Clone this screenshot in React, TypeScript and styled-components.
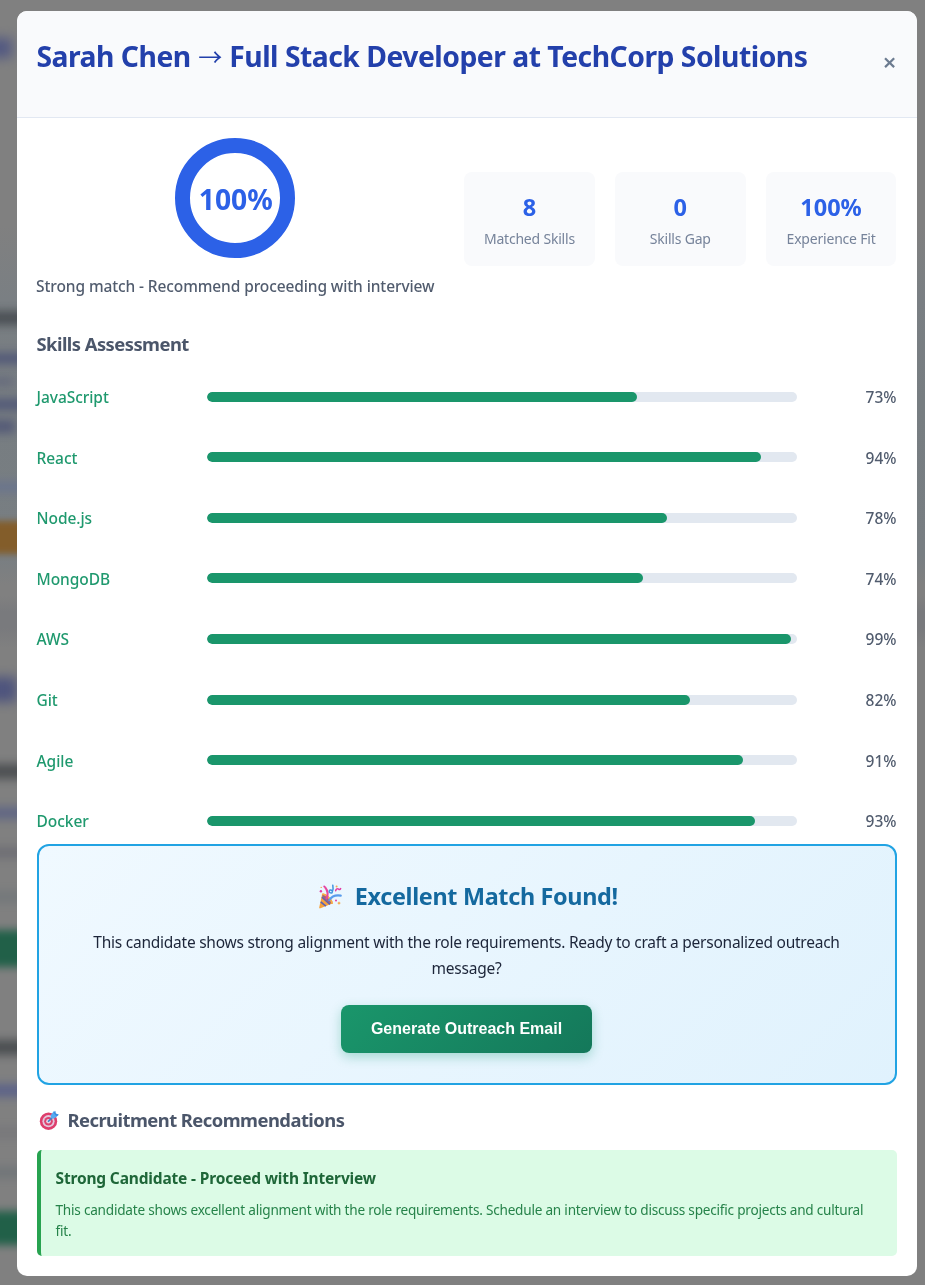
import React from "react";
import styled, { createGlobalStyle } from "styled-components";

const GlobalStyle = createGlobalStyle`
  * { box-sizing: border-box; margin: 0; }
  html, body { height: 100%; }
  body {
    margin: 0;
    overflow: hidden;
    background: #808080;
    color: #1a2236;
    font-family: "Noto Sans", "Open Sans", sans-serif;
    font-size: 16px;
    line-height: 1.6;
  }
`;

/* ---------- dimmed page behind the dialog ---------- */

const Backdrop = styled.div`
  position: fixed;
  inset: 0;
  overflow: hidden;
  background: linear-gradient(
    #808080 0, #808080 225px, #7a7f83 300px, #777d81 400px, #787e82 555px,
    #808080 585px, #808080 596px, #797a7d 612px, #797a7d 628px, #808080 648px
  );
`;

const Smudge = styled.div<{ $gap: number; $h: number; $w?: number; $color: string; $soft?: number }>`
  margin-top: ${(p) => p.$gap}px;
  margin-left: -12px;
  width: ${(p) => p.$w ?? 60}px;
  height: ${(p) => p.$h}px;
  background: ${(p) => p.$color};
  filter: blur(${(p) => p.$soft ?? 5}px);
  opacity: 0.88;
`;

const smudges = [
  { gap: 38, h: 20, w: 24, color: "#4c5382", soft: 6 },
  { gap: 253, h: 14, color: "#44494e" },
  { gap: 28, h: 11, color: "#4c5376" },
  { gap: 13, h: 9, w: 26, color: "#63687c" },
  { gap: 13, h: 11, color: "#4c5376" },
  { gap: 10, h: 13, w: 27, color: "#4f5576" },
  { gap: 49, h: 10, color: "#687390" },
  { gap: 29, h: 33, color: "#85591f", soft: 3 },
  { gap: 123, h: 25, w: 29, color: "#474e7d", soft: 6 },
  { gap: 62, h: 15, color: "#46494c" },
  { gap: 28, h: 12, color: "#5b6285" },
  { gap: 28, h: 11, color: "#6b6b72" },
  { gap: 33, h: 12, color: "#72777a" },
  { gap: 27, h: 37, color: "#145c41", soft: 4 },
  { gap: 73, h: 15, color: "#44484b" },
  { gap: 29, h: 13, color: "#575f8a" },
  { gap: 30, h: 11, color: "#76767a" },
  { gap: 29, h: 11, color: "#6e7377" },
  { gap: 33, h: 34, color: "#145c41", soft: 4 },
];

/* ---------- dialog ---------- */

const Stage = styled.div`
  position: relative;
  padding: 10.6px 8px 9px 16.5px;
`;

const Modal = styled.section`
  width: 900px;
  height: 1265px;
  border-radius: 10px;
  background: #fff;
  overflow: hidden;
`;

const Header = styled.header`
  display: flex;
  align-items: center;
  justify-content: space-between;
  height: 107px;
  padding: 20px;
  background: #f9fafc;
  border-bottom: 1px solid #e2e8f2;
`;

const Title = styled.h2`
  margin-bottom: 18px;
  padding-top: 2px;
  font-size: 28.3px;
  font-weight: 700;
  line-height: 46px;
  letter-spacing: -0.5px;
  white-space: nowrap;
  color: #2340ab;
`;

const Arrow = styled.span`
  margin: 0 0.7px;
  font: 400 24px/1 "Noto Sans CJK JP", sans-serif;
  vertical-align: 1px;
`;

const CloseButton = styled.button`
  padding: 0 0 4px;
  border: 0;
  background: none;
  font: 600 24px/36px "Noto Sans", sans-serif;
  color: #6c7b90;
`;

const Body = styled.div`
  padding: 20px;
`;

const ScoreArea = styled.div`
  display: grid;
  grid-template-columns: 397.5px 1fr;
  column-gap: 30px;
  align-items: center;
  height: 160.6px;
  margin-bottom: 30px;
`;

const ScoreColumn = styled.div`
  display: flex;
  flex-direction: column;
  align-items: center;
  gap: 16px;
`;

const Ring = styled.div`
  display: flex;
  align-items: center;
  justify-content: center;
  width: 120px;
  height: 120px;
  padding: 5px 0 0 1px;
  border: 15px solid #2c61e7;
  border-radius: 50%;
  font-size: 28.3px;
  font-weight: 700;
  color: #2c61e7;
  white-space: nowrap;
`;

const Verdict = styled.p`
  font-size: 15.5px;
  font-weight: 500;
  line-height: 25.6px;
  letter-spacing: -0.11px;
  white-space: nowrap;
  color: #515c6e;
`;

const Stats = styled.div`
  display: grid;
  grid-template-columns: repeat(3, 1fr);
  gap: 20px;
  margin-top: 2px;
`;

const StatCard = styled.div`
  height: 94px;
  padding: 16px 15px 14px;
  border-radius: 8px;
  background: #f9fafc;
  text-align: center;
  white-space: nowrap;
`;

const StatValue = styled.div`
  font-size: 23.5px;
  font-weight: 700;
  line-height: 38.4px;
  color: #2c61e7;
`;

const StatLabel = styled.div`
  font-size: 14px;
  line-height: 24.6px;
  letter-spacing: -0.2px;
  color: #76839a;
`;

const SectionTitle = styled.h3`
  display: flex;
  align-items: center;
  gap: 8px;
  margin-bottom: 15px;
  font-size: 18.4px;
  font-weight: 700;
  line-height: 30.7px;
  letter-spacing: -0.54px;
  color: #4b566a;
`;

const SkillsTitle = styled(SectionTitle)`
  padding-top: 1px;
  margin-bottom: 14px;
`;

const SkillList = styled.ul`
  display: flex;
  flex-direction: column;
  gap: 15px;
  padding: 0;
  list-style: none;
`;

const SkillRow = styled.li`
  display: grid;
  grid-template-columns: 150px 1fr 80px;
  column-gap: 20px;
  align-items: center;
  height: 45.6px;
`;

const SkillName = styled.span`
  padding-top: 1.4px;
  font-size: 15.5px;
  font-weight: 500;
  letter-spacing: -0.05px;
  color: #1f996e;
`;

const Track = styled.div`
  height: 10px;
  border-radius: 5px;
  background: #e2e8f0;
  overflow: hidden;
`;

const Fill = styled.div`
  height: 100%;
  border-radius: 5px;
  background: #1a966b;
`;

const Percent = styled.span`
  padding-top: 1.4px;
  font-size: 15.5px;
  font-weight: 500;
  text-align: right;
  color: #515c6e;
`;

const Banner = styled.div`
  display: flex;
  flex-direction: column;
  align-items: center;
  height: 241px;
  padding: 31px 30px 28px;
  margin-bottom: 20px;
  border: 2px solid #21a3e3;
  border-radius: 12px;
  background: linear-gradient(135deg, #f0f9ff, #e0f2fd);
  text-align: center;
`;

const BannerTitle = styled.h3`
  display: flex;
  align-items: center;
  gap: 11.5px;
  margin-bottom: 15px;
  padding-left: 2px;
  font-size: 23.4px;
  font-weight: 700;
  line-height: 38.4px;
  letter-spacing: -0.33px;
  color: #14699f;
`;

const BannerText = styled.p`
  margin-bottom: 23.6px;
  font-size: 15.5px;
  line-height: 25.6px;
  letter-spacing: -0.24px;
  color: #1c2539;
`;

const PrimaryButton = styled.button`
  height: 48px;
  width: 251px;
  padding: 0;
  border: 0;
  border-radius: 8px;
  background: linear-gradient(135deg, #1a966b, #14785a);
  box-shadow: 0 4px 12px rgba(5, 150, 105, 0.3);
  font: 700 16px/18px "Liberation Sans", Arial, sans-serif;
  color: #fff;
  white-space: nowrap;
`;

const Recommendation = styled.div`
  height: 106px;
  padding: 16px 15px 14px;
  border-left: 4px solid #27a350;
  border-radius: 5px;
  background: #dcfbe6;
`;

const RecTitle = styled.h4`
  margin-bottom: 7px;
  font-size: 15.5px;
  font-weight: 700;
  line-height: 25.6px;
  letter-spacing: -0.16px;
  color: #1e6638;
`;

const RecText = styled.p`
  font-size: 13.6px;
  line-height: 21px;
  letter-spacing: -0.222px;
  color: #26834a;
`;

const PartyIcon = () => (
  <svg width="26" height="26" viewBox="0 0 26 26" fill="none" strokeLinecap="round">
    <path d="M2.2 24.6 5.1 11.2c3.8.4 9.4 5.4 10.2 9.4L3.4 25.3c-.8.3-1.400 0-1.200-.7Z" fill="#f7a23b" />
    <path d="m5 14 8 7.300M3.700 18.800l5.200 4.400" stroke="#5b62b5" strokeWidth="1.700" strokeLinecap="butt" />
    <ellipse cx="10.400" cy="15.600" rx="6.600" ry="2.300" transform="rotate(43 10.4 15.6)" fill="#a0607e" />
    <path d="M5.600 11.200c2.400-.4 8.600 4.600 9.600 9" stroke="#fbae42" strokeWidth="1.600" />
    <path d="M9.600 15.400C11.500 11 10.600 7.500 8.200 4.400" stroke="#e8489c" strokeWidth="2.100" />
    <path d="M12.200 17.200c2.300-3.600 6-5.600 11.600-4.600" stroke="#5a9cec" strokeWidth="2.100" />
    <path d="M15.800 2.200c.6 2.400.4 5.300-.8 7.600-1.500.5-3-.2-2.800-1.700.2-1.300 1.800-1.600 3-.5" stroke="#3f94e0" strokeWidth="1.500" />
    <path d="M18.700 7.800c.2-2.200 1.800-2.400 3-1.600.8.500 1.500.2 1.900-.5" stroke="#e23aa4" strokeWidth="1.600" />
    <circle cx="3.900" cy="8.200" r="1.200" fill="#e23aa4" />
    <circle cx="7.200" cy="3.400" r=".9" fill="#e23aa4" />
    <circle cx="4.200" cy="4.400" r=".7" fill="#f7a23b" />
    <circle cx="19.600" cy="3.600" r="1" fill="#f2aa55" />
    <circle cx="19" cy="17.400" r="1" fill="#e23aa4" />
    <path d="m22 18.200.6 1.300 1.300.6-1.300.6-.6 1.300-.6-1.300-1.300-.6 1.300-.6Z" fill="#f7a23b" />
  </svg>
);

const TargetIcon = () => (
  <svg width="23" height="22" viewBox="0 0 23 22" fill="none">
    <circle cx="11.500" cy="12.200" r="8.700" fill="#de3e6c" />
    <circle cx="11.500" cy="12.200" r="6.100" fill="#e3c6dc" />
    <circle cx="11.500" cy="12.200" r="4.300" fill="#dd426f" />
    <circle cx="11.500" cy="12.200" r="2.300" fill="#e8cfe2" />
    <path d="m11.500 12.200 5.500-5.600" stroke="#3b82c8" strokeWidth="1.600" strokeLinecap="round" />
    <path d="m13.700 6.200 3.400-4.400 1.200 2.700 3.300 1.400-4.300 3.600-3.200-.2Z" fill="#55aaf0" />
    <path d="m16.500 3.800 1.800-2.100.6 2.800 2.900.9-2.300 2.100Z" fill="#3c8fe0" />
  </svg>
);

const stats = [
  { value: "8", label: "Matched Skills" },
  { value: "0", label: "Skills Gap" },
  { value: "100%", label: "Experience Fit" },
];

const skills = [
  { name: "JavaScript", score: 73 },
  { name: "React", score: 94 },
  { name: "Node.js", score: 78 },
  { name: "MongoDB", score: 74 },
  { name: "AWS", score: 99 },
  { name: "Git", score: 82 },
  { name: "Agile", score: 91 },
  { name: "Docker", score: 93 },
];

export default function App() {
  return (
    <>
      <GlobalStyle />
      <Backdrop aria-hidden>
        {smudges.map((s, i) => (
          <Smudge key={i} $gap={s.gap} $h={s.h} $w={s.w} $color={s.color} $soft={s.soft} />
        ))}
      </Backdrop>
      <Stage>
        <Modal role="dialog">
          <Header>
            <Title>
              Sarah Chen <Arrow>→</Arrow> Full Stack Developer at TechCorp Solutions
            </Title>
            <CloseButton aria-label="Close">×</CloseButton>
          </Header>
          <Body>
            <ScoreArea>
              <ScoreColumn>
                <Ring>100%</Ring>
                <Verdict>Strong match - Recommend proceeding with interview</Verdict>
              </ScoreColumn>
              <Stats>
                {stats.map((s) => (
                  <StatCard key={s.label}>
                    <StatValue>{s.value}</StatValue>
                    <StatLabel>{s.label}</StatLabel>
                  </StatCard>
                ))}
              </Stats>
            </ScoreArea>

            <SkillsTitle>Skills Assessment</SkillsTitle>
            <SkillList>
              {skills.map((s) => (
                <SkillRow key={s.name}>
                  <SkillName>{s.name}</SkillName>
                  <Track>
                    <Fill style={{ width: `${s.score}%` }} />
                  </Track>
                  <Percent>{s.score}%</Percent>
                </SkillRow>
              ))}
            </SkillList>

            <Banner>
              <BannerTitle>
                <PartyIcon />
                Excellent Match Found!
              </BannerTitle>
              <BannerText>
                This candidate shows strong alignment with the role requirements. Ready to craft a
                personalized outreach message?
              </BannerText>
              <PrimaryButton>Generate Outreach Email</PrimaryButton>
            </Banner>

            <SectionTitle>
              <TargetIcon />
              Recruitment Recommendations
            </SectionTitle>
            <Recommendation>
              <RecTitle>Strong Candidate - Proceed with Interview</RecTitle>
              <RecText>
                This candidate shows excellent alignment with the role requirements. Schedule an
                interview to discuss specific projects and cultural fit.
              </RecText>
            </Recommendation>
          </Body>
        </Modal>
      </Stage>
    </>
  );
}
